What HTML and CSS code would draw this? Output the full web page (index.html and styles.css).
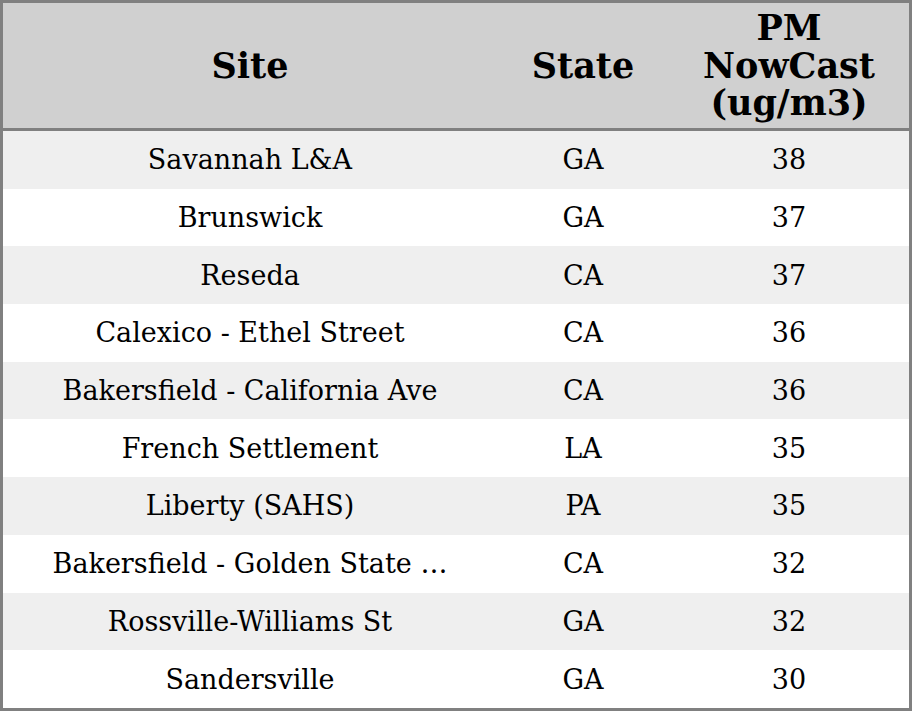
FILE: index.html
```html
<!DOCTYPE html>
<html>
<head>
<meta charset="utf-8">
<link rel="stylesheet" href="styles.css">
</head>
<body>
<table class="grid">
  <colgroup>
    <col class="c-site">
    <col class="c-state">
    <col class="c-pm">
  </colgroup>
  <thead>
    <tr><th>Site</th><th>State</th><th>PM<br>NowCast<br>(ug/m3)</th></tr>
  </thead>
  <tbody>
    <tr><td>Savannah L&amp;A</td><td>GA</td><td>38</td></tr>
    <tr><td>Brunswick</td><td>GA</td><td>37</td></tr>
    <tr><td>Reseda</td><td>CA</td><td>37</td></tr>
    <tr><td>Calexico - Ethel Street</td><td>CA</td><td>36</td></tr>
    <tr><td>Bakersfield - California Ave</td><td>CA</td><td>36</td></tr>
    <tr><td>French Settlement</td><td>LA</td><td>35</td></tr>
    <tr><td>Liberty (SAHS)</td><td>PA</td><td>35</td></tr>
    <tr><td>Bakersfield - Golden State …</td><td>CA</td><td>32</td></tr>
    <tr><td>Rossville-Williams St</td><td>GA</td><td>32</td></tr>
    <tr><td>Sandersville</td><td>GA</td><td>30</td></tr>
  </tbody>
</table>
</body>
</html>
```
FILE: styles.css
```css
html, body {
  margin: 0;
  padding: 0;
  background: #fff;
}
.grid {
  width: 912px;
  height: 711px;
  border-collapse: separate;
  border-spacing: 0;
  border: 3px solid #808080;
  box-sizing: border-box;
  table-layout: fixed;
  font-family: "DejaVu Serif", serif;
  color: #000;
}
.c-site { width: 494px; }
.c-state { width: 172px; }
.c-pm { width: 240px; }
.grid th {
  background: #d0d0d0;
  font-size: 35px;
  font-weight: bold;
  line-height: 37.7px;
  height: 128px;
  padding: 0;
  border-bottom: 3px solid #808080;
  box-sizing: border-box;
  text-align: center;
  vertical-align: middle;
}
.grid td {
  font-size: 27px;
  text-align: center;
  vertical-align: middle;
  padding: 0;
  white-space: nowrap;
}
.grid tbody tr:nth-child(odd) td {
  background: #efefef;
}
```
